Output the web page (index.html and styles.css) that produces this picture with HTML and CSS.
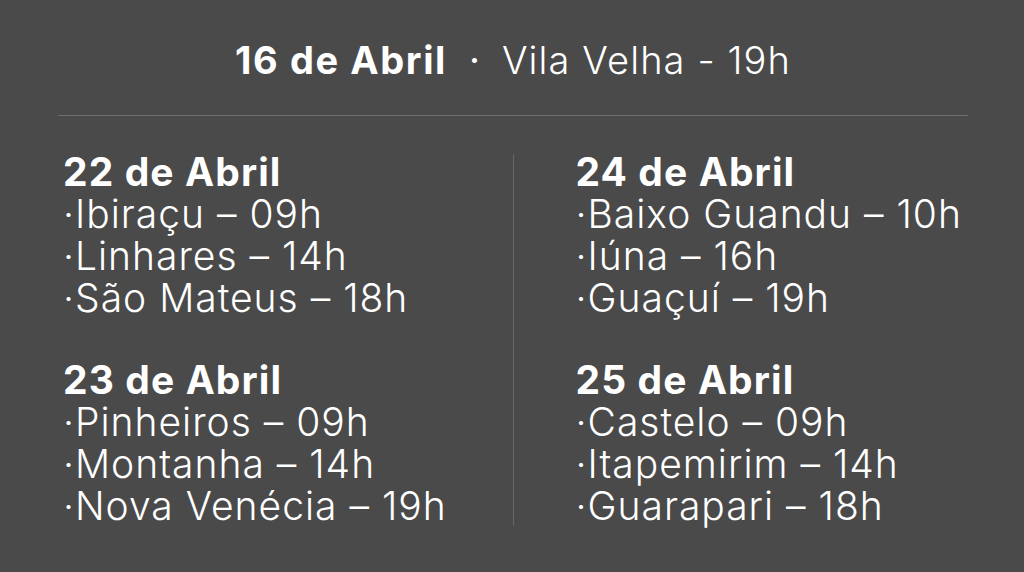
FILE: index.html
```html
<!DOCTYPE html>
<html lang="pt">
<head>
<meta charset="utf-8">
<link rel="stylesheet" href="styles.css">
</head>
<body>
<main class="page">
  <header class="top">
    <span class="top-date">16 de Abril</span>
    <span class="top-dot">·</span>
    <span class="top-place">Vila Velha - 19h</span>
  </header>
  <div class="rule"></div>
  <section class="cols">
    <div class="col col-left">
      <div class="day">
        <h2 class="day-title">22 de Abril</h2>
        <p class="item">·Ibiraçu – 09h</p>
        <p class="item">·Linhares – 14h</p>
        <p class="item">·São Mateus – 18h</p>
      </div>
      <div class="day">
        <h2 class="day-title">23 de Abril</h2>
        <p class="item">·Pinheiros – 09h</p>
        <p class="item">·Montanha – 14h</p>
        <p class="item">·Nova Venécia – 19h</p>
      </div>
    </div>
    <div class="divider"></div>
    <div class="col col-right">
      <div class="day">
        <h2 class="day-title">24 de Abril</h2>
        <p class="item">·Baixo Guandu – 10h</p>
        <p class="item">·Iúna – 16h</p>
        <p class="item">·Guaçuí – 19h</p>
      </div>
      <div class="day">
        <h2 class="day-title">25 de Abril</h2>
        <p class="item">·Castelo – 09h</p>
        <p class="item">·Itapemirim – 14h</p>
        <p class="item">·Guarapari – 18h</p>
      </div>
    </div>
  </section>
</main>
</body>
</html>
```
FILE: styles.css
```css
html, body {
  margin: 0;
  padding: 0;
}
body {
  background: #4a4a4a;
  color: #ffffff;
  font-family: Inter, "Noto Sans", sans-serif;
  width: 1024px;
  height: 572px;
  overflow: hidden;
}
.page {
  padding: 30px 56px 0 58px;
}
.top {
  display: flex;
  justify-content: center;
  align-items: baseline;
  font-size: 38px;
  line-height: 60px;
  height: 60px;
}
.top-date {
  font-weight: 700;
  letter-spacing: 1.6px;
}
.top-dot {
  font-weight: 400;
  margin: 0 22px 0 22px;
}
.top-place {
  font-weight: 300;
  letter-spacing: 1.1px;
}
.rule {
  margin-top: 25px;
  height: 1px;
  background: #6e6e6e;
}
.cols {
  display: grid;
  grid-template-columns: 1fr 1px 1fr;
  margin-top: 38px;
}
.col {
  display: flex;
  flex-direction: column;
  gap: 40px;
  margin-top: -3px;
}
.col-left {
  padding-left: 5px;
}
.col-right {
  padding-left: 62px;
}
.divider {
  width: 1px;
  background: #666666;
  height: 372px;
}
.day-title {
  margin: 0;
  font-size: 39px;
  line-height: 42px;
  font-weight: 700;
  letter-spacing: 1.1px;
}
.item {
  margin: 0;
  font-size: 39px;
  line-height: 42px;
  font-weight: 350;
  letter-spacing: 1px;
}
```
